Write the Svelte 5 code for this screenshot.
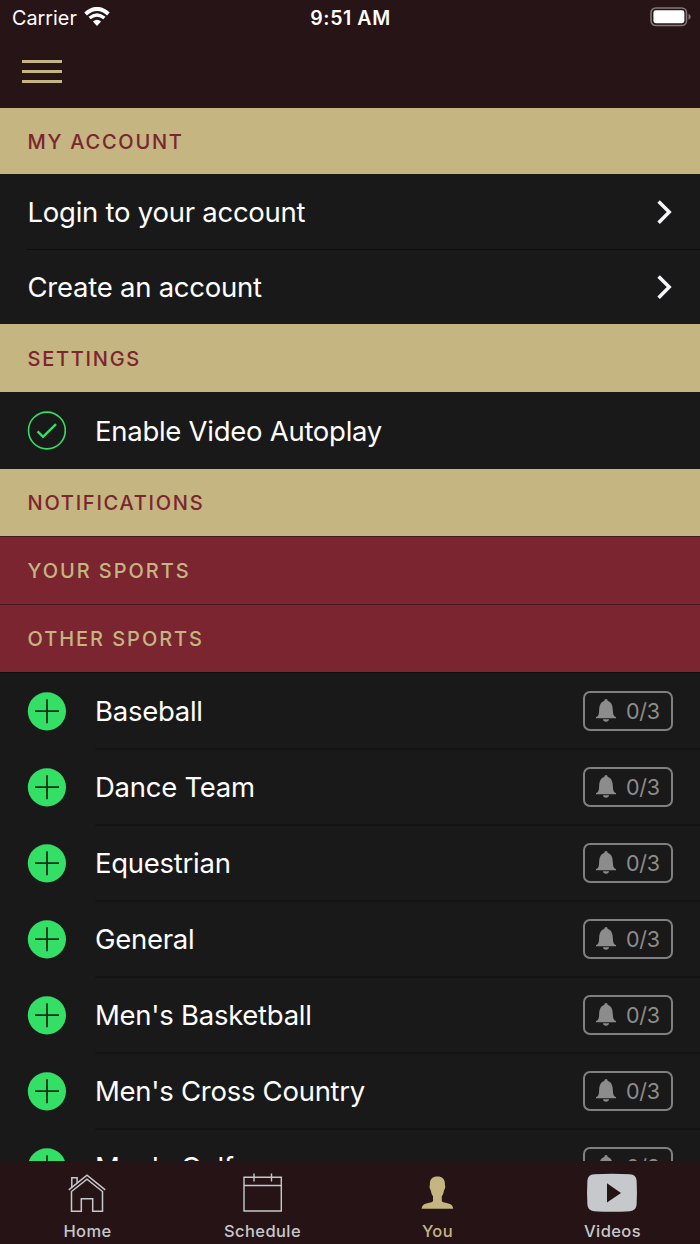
<script>
  const sports = [
    'Baseball',
    'Dance Team',
    'Equestrian',
    'General',
    "Men's Basketball",
    "Men's Cross Country",
    "Men's Golf"
  ];
</script>

{#snippet chevron()}
  <svg class="chevron" width="16" height="26" viewBox="0 0 16 26">
    <path d="M1.6 2.5 12.2 13.1 1.6 23.7" fill="none" stroke="#f7f7fb" stroke-width="3.5" />
  </svg>
{/snippet}

<div class="screen">
  <header>
    <div class="status">
      <div class="carrier">
        <span>Carrier</span>
        <svg width="26" height="20" viewBox="0 0 26 20">
          <g fill="none" stroke="#fff">
            <path d="M1.6 6.9Q13-3 24.4 6.9" stroke-width="4" />
            <path d="M5.6 11Q13 4.8 20.4 11" stroke-width="3.4" />
          </g>
          <path d="M8.9 14.6Q13 10.8 17.1 14.6L13 18.9Z" fill="#fff" />
        </svg>
      </div>
      <span class="time">9:51 AM</span>
      <svg class="battery" width="42" height="20" viewBox="0 0 42 20">
        <rect x="1" y="1" width="35.5" height="17.5" rx="4.8" fill="none" stroke="#827779" stroke-width="1.6" />
        <rect x="3.4" y="3.3" width="31" height="12.9" rx="2.4" fill="#fff" />
        <path d="M38.5 6.8q2.2 1 2.2 3t-2.2 3z" fill="#827779" />
      </svg>
    </div>
    <div class="menu"><i></i><i></i><i></i></div>
  </header>

  <main>
    <h2 class="first">MY ACCOUNT</h2>
    <div class="link">Login to your account{@render chevron()}</div>
    <div class="link last">Create an account{@render chevron()}</div>
    <h2 class="settings">SETTINGS</h2>
    <div class="toggle">
      <svg width="39" height="39" viewBox="0 0 39 39">
        <g fill="none" stroke="#34df66">
          <circle cx="19.9" cy="19.5" r="18.4" stroke-width="1.6" />
          <path d="M10.6 20.4 16 25.8 29 13.2" stroke-width="2.4" />
        </g>
      </svg>
      <span>Enable Video Autoplay</span>
    </div>
    <h2>NOTIFICATIONS</h2>
    <h3>YOUR SPORTS</h3>
    <h3>OTHER SPORTS</h3>

    <div class="list">
      {#each sports as sport}
        <div class="sport">
          <svg class="add" width="39" height="39" viewBox="0 0 39 39">
            <circle cx="19.9" cy="19.3" r="19.1" fill="#34df66" />
            <path d="M8 19.2h24M20 7.2v24" stroke="#14301c" stroke-width="1.8" />
          </svg>
          <div class="body">
            <span>{sport}</span>
            <div class="badge">
              <svg width="22" height="26" viewBox="0 0 22 26">
                <path d="M1 20.2v-1.1c2.2-.7 2.9-2.6 3.1-6.2.2-5.2 1.2-8.7 5.2-9.9 0-1.2.7-2.1 1.7-2.1s1.7.9 1.7 2.1c4 1.2 5 4.7 5.2 9.9.2 3.6.9 5.5 3.1 6.2v1.1zM7.9 21.3h6.2c-.2 1.5-1.4 2.5-3.1 2.5s-2.9-1-3.1-2.5z" fill="#8c8c8c" />
              </svg>
              <span>0/3</span>
            </div>
          </div>
        </div>
      {/each}
    </div>
  </main>

  <nav>
    <div class="tab">
      <svg width="52" height="42" viewBox="0 0 52 42">
        <g fill="none" stroke="#c6c9cc" stroke-width="1.5">
          <path d="M7.8 17.9 26 3.2 44.2 17.9" />
          <path d="M10.5 19.5V39.3H20.3V26.7H31.7V39.3H41.5V19.5L26 7.1Z" />
          <path d="M10.8 15.4V5.7H16.1V10.9" />
        </g>
      </svg>
      <span>Home</span>
    </div>
    <div class="tab">
      <svg width="52" height="42" viewBox="0 0 52 42">
        <path d="M8 5.3H45.300V39H8ZM8 13.500H45.300M18 1.500V9.500M35.500 1.500V9.500" fill="none" stroke="#c6c9cc" stroke-width="1.4" />
      </svg>
      <span>Schedule</span>
    </div>
    <div class="tab active">
      <svg width="52" height="42" viewBox="0 0 52 42">
        <path transform="translate(.4 -.9)" d="M26 5.5c4.8 0 7.6 2.6 7.5 7.4 0 2.1.5 1.7.3 3.6-.2 1.7-1 1.7-1.3 3.4-.5 3.1-1.5 4.3-2.1 5.3v4.6c1.4 2 5.7 1.7 8.7 3.4 1.5.9 2.5 2.2 2.7 4.5H10.2c.2-2.3 1.2-3.6 2.7-4.5 3-1.7 7.3-1.4 8.7-3.4v-4.6c-.6-1-1.6-2.2-2.1-5.3-.3-1.7-1.1-1.7-1.3-3.4-.2-1.9.3-1.5.3-3.6-.1-4.8 2.7-7.4 7.5-7.4z" fill="#c4b581" />
      </svg>
      <span>You</span>
    </div>
    <div class="tab">
      <svg width="52" height="42" viewBox="0 0 52 42">
        <g transform="translate(0 -.4)">
          <path d="M8 2.6Q26 1.6 44 2.6Q50.2 3 50.6 9Q51.3 21 50.6 33Q50.2 39.2 44 39.7Q26 40.7 8 39.7Q1.8 39.2 1.4 33Q.7 21 1.4 9Q1.8 3 8 2.6Z" fill="#c6c9cc" />
          <path d="M21 11.7V31L35 21.3Z" fill="#261316" />
        </g>
      </svg>
      <span>Videos</span>
    </div>
  </nav>
</div>

<style>
  :global(body) { background: #191919; }
  .screen {
    width: 700px; height: 1244px; overflow: hidden;
    display: flex; flex-direction: column;
    background: #191919; color: #fff;
    font-family: Inter, "Liberation Sans", sans-serif;
  }
  svg { display: block; flex: none; }
  header { height: 108px; flex: none; background: #261417; }
  .status {
    height: 36px; display: grid; grid-template-columns: 1fr auto 1fr; align-items: center;
    padding: 0 8px 0 12px; font-size: 19.8px; line-height: 36px;
  }
  .carrier { display: flex; align-items: center; gap: 7px; }
  .carrier svg { margin-top: -3px; }
  .time { font-weight: 600; font-size: 19.5px; letter-spacing: .6px; margin-right: 3px; }
  .battery { justify-self: end; margin-top: -2px; }
  .menu { display: flex; flex-direction: column; gap: 7px; padding: 24px 22px 0; }
  .menu i { width: 40px; height: 3px; background: #c4b581; }
  main { flex: 1; min-height: 0; overflow: hidden; }
  h2, h3 {
    margin: 0; padding: 1px 27.5px 0; height: 67px; box-sizing: border-box;
    display: flex; align-items: center;
    font-size: 20px; font-weight: 450; letter-spacing: 1.75px;
  }
  h2 { background: #c4b581; color: #7c2430; }
  h2.first { height: 66px; }
  h2.settings { height: 68px; }
  h3 { height: 68px; background: #7b2530; color: #c4b581; border-top: 1px solid #421a20; letter-spacing: 1.95px; }
  .link {
    height: 75px; margin-left: 27px; padding: 0 27px 0 .5px;
    display: flex; align-items: center; justify-content: space-between;
    font-size: 27.5px; letter-spacing: -.25px; border-bottom: 1px solid #0e0e0e;
  }
  .link.last { height: 74px; border: 0; }
  .toggle, .sport { display: flex; align-items: center; padding-left: 27px; gap: 29px; font-size: 27.5px; letter-spacing: -.27px; }
  .toggle { height: 77px; }
  .list { border-top: 1px solid #100d0e; padding-top: 1px; }
  .sport { height: 76px; }
  .add { margin-top: -1px; }
  .body {
    flex: 1; height: 76px; box-sizing: border-box; padding-right: 27px;
    display: flex; align-items: center; justify-content: space-between;
    border-bottom: 2px solid #131313;
  }
  .badge {
    width: 90px; height: 40px; box-sizing: border-box; border: 2px solid #808080;
    border-radius: 7px; display: flex; align-items: center; padding-left: 10px; gap: 9px;
    color: #8c8c8c; font-size: 21.5px;
  }
  nav { height: 83px; flex: none; display: grid; grid-template-columns: repeat(4, 1fr); background: #261316; }
  .tab { display: flex; flex-direction: column; align-items: center; padding-top: 11px; color: #c6c9cc; }
  .tab svg { margin-left: -1px; }
  .tab span { font-size: 16.5px; font-weight: 500; line-height: 20px; margin-top: 7px; letter-spacing: .4px; }
  .tab.active { color: #c4b581; }
</style>
